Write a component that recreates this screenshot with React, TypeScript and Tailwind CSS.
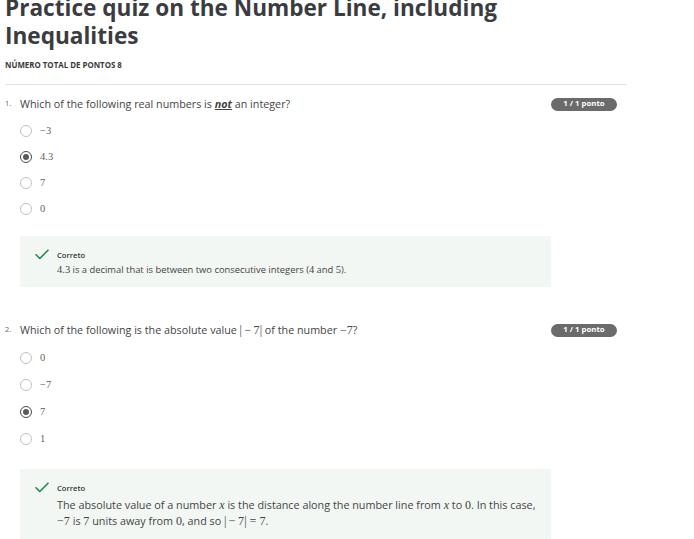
import React from "react";

function Radio({ checked }: { checked?: boolean }) {
  return checked ? (
    <span className="w-[12px] h-[12px] rounded-full border-[1.5px] border-[#4a4a4a] flex items-center justify-center flex-shrink-0">
      <span className="w-[6px] h-[6px] rounded-full bg-[#5a5a5a]" />
    </span>
  ) : (
    <span className="w-[12px] h-[12px] rounded-full border border-[#c2c2c2] flex-shrink-0" />
  );
}

function Check() {
  return (
    <svg width="14" height="11" viewBox="0 0 14 11" fill="none" className="flex-shrink-0 mt-[-1px]">
      <path d="M1 5.8L4.8 9.5L13 1.2" stroke="#1f8a4c" strokeWidth="1.6" strokeLinecap="round" strokeLinejoin="round" />
    </svg>
  );
}

function Badge() {
  return (
    <span className="w-[66px] h-[13px] rounded-full bg-[#6b6b6b] text-white text-[7.8px] font-bold flex items-center justify-center">
      1 / 1 ponto
    </span>
  );
}

function Option({ label, checked, h }: { label: React.ReactNode; checked?: boolean; h: string }) {
  return (
    <div className={`flex items-center gap-[8px] pl-[15px] ${h}`}>
      <Radio checked={checked} />
      <span className="font-['Liberation_Serif',serif] text-[10.5px] text-[#5f5f5f]">{label}</span>
    </div>
  );
}

function Feedback({ children, big }: { children: React.ReactNode; big?: boolean }) {
  return (
    <div className="ml-[15px] w-[531px] bg-[#f2f7f4] pl-[15px] pt-[14px] pb-[11px] flex gap-[8px]">
      <div className="h-[10px] flex items-center">
        <Check />
      </div>
      <div className="flex flex-col">
        <span className="text-[7.6px] leading-[10px] font-semibold text-[#333]">Correto</span>
        <div
          className={
            big
              ? "mt-[4px] text-[10.8px] leading-[16px] text-[#444] w-[480px]"
              : "mt-[4px] text-[9.4px] leading-[12px] text-[#444]"
          }
        >
          {children}
        </div>
      </div>
    </div>
  );
}

function M({ children }: { children: React.ReactNode }) {
  return <span className="font-['Liberation_Serif',serif] text-[1.12em]">{children}</span>;
}

export default function App() {
  return (
    <div className="w-[627px] pl-[5px] bg-white font-['Open_Sans',sans-serif] text-[#3a3a3a]">
      <h1 className="mt-[-6px] text-[22.6px] leading-[28px] font-bold text-[#3a3c3f]">
        Practice quiz on the Number Line, including Inequalities
      </h1>
      <div className="mt-[10px] text-[7.9px] leading-[10px] font-bold uppercase text-[#3a3a3a]">
        Número total de pontos 8
      </div>
      <div className="mt-[14px] border-t border-[#e2e2e2]" />

      {/* Question 1 */}
      <div className="mt-[12px] flex items-center justify-between pr-[10px] h-[14px]">
        <div className="flex items-center">
          <span className="w-[15px] text-[7.5px] text-[#666]">1.</span>
          <span className="text-[10.75px] text-[#444]">
            Which of the following real numbers is{" "}
            <em className="font-bold underline">not</em> an integer?
          </span>
        </div>
        <Badge />
      </div>
      <div className="mt-[7px] flex flex-col">
        <Option h="h-[26px]" label="−3" />
        <Option h="h-[26px]" label="4.3" checked />
        <Option h="h-[26px]" label="7" />
        <Option h="h-[26px]" label="0" />
      </div>
      <div className="mt-[14px]">
        <Feedback>
          <M>4.3</M> is a decimal that is between two consecutive integers (<M>4</M> and <M>5</M>).
        </Feedback>
      </div>

      {/* Question 2 */}
      <div className="mt-[36px] flex items-center justify-between pr-[10px] h-[14px]">
        <div className="flex items-center">
          <span className="w-[15px] text-[7.5px] text-[#666]">2.</span>
          <span className="text-[10.75px] text-[#444]">
            Which of the following is the absolute value <M>|&thinsp;−&thinsp;7|</M> of the number{" "}
            <M>−7</M>?
          </span>
        </div>
        <Badge />
      </div>
      <div className="mt-[7px] flex flex-col">
        <Option h="h-[27px]" label="0" />
        <Option h="h-[27px]" label="−7" />
        <Option h="h-[27px]" label="7" checked />
        <Option h="h-[27px]" label="1" />
      </div>
      <div className="mt-[17px]">
        <Feedback big>
          The absolute value of a number <M><i>x</i></M> is the distance along the number line from{" "}
          <M><i>x</i></M> to <M>0</M>. In this case, <M>−7</M> is <M>7</M> units away from <M>0</M>, and so{" "}
          <M>|&thinsp;−&thinsp;7| = 7</M>.
        </Feedback>
      </div>
    </div>
  );
}
